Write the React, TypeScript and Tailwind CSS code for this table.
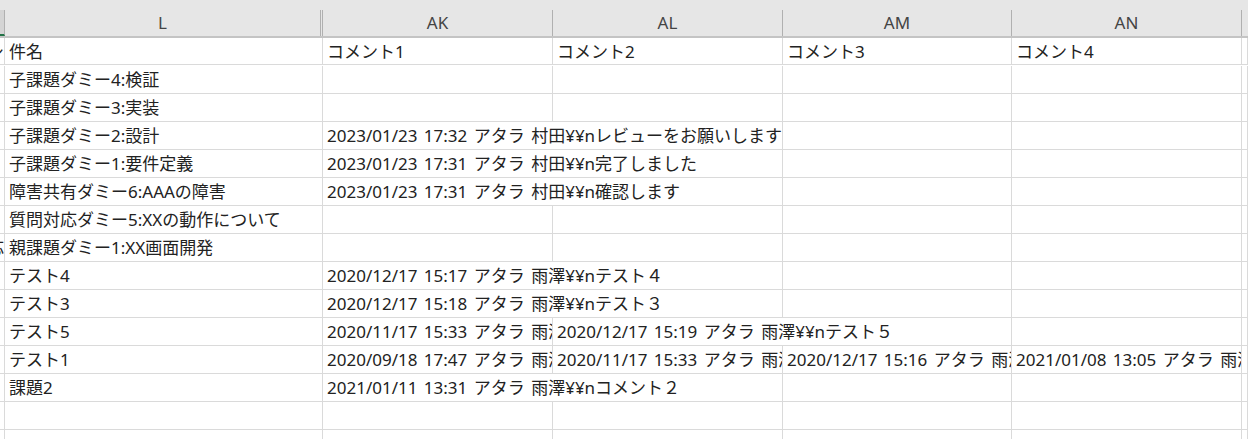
import React from "react";

type Seg = { span: number; text: string; frag?: boolean };

const SPAN: Record<number, string> = {
  1: "col-span-1",
  2: "col-span-2",
  3: "col-span-3",
  4: "col-span-4",
};

const FONT = {
  fontFamily: '"Noto Sans", "Noto Sans CJK JP", sans-serif',
};

function row(frag: string, l: string, rest: Array<[number, string]>): Seg[] {
  const segs: Seg[] = [{ span: 1, text: frag, frag: true }, { span: 1, text: l }];
  let used = 0;
  for (const [s, t] of rest) {
    segs.push({ span: s, text: t });
    used += s;
  }
  for (let i = used; i < 4; i++) segs.push({ span: 1, text: "" });
  segs.push({ span: 1, text: "" });
  return segs;
}

const ROWS: Seg[][] = [
  row("シ", "件名", [
    [1, "コメント1"],
    [1, "コメント2"],
    [1, "コメント3"],
    [1, "コメント4"],
  ]),
  row("", "子課題ダミー4:検証", []),
  row("", "子課題ダミー3:実装", []),
  row("", "子課題ダミー2:設計", [[2, "2023/01/23 17:32 アタラ 村田¥¥nレビューをお願いします"]]),
  row("", "子課題ダミー1:要件定義", [[2, "2023/01/23 17:31 アタラ 村田¥¥n完了しました"]]),
  row("", "障害共有ダミー6:AAAの障害", [[2, "2023/01/23 17:31 アタラ 村田¥¥n確認します"]]),
  row("", "質問対応ダミー5:XXの動作について", []),
  row("応", "親課題ダミー1:XX画面開発", []),
  row("", "テスト4", [[2, "2020/12/17 15:17 アタラ 雨澤¥¥nテスト４"]]),
  row("", "テスト3", [[2, "2020/12/17 15:18 アタラ 雨澤¥¥nテスト３"]]),
  row("", "テスト5", [
    [1, "2020/11/17 15:33 アタラ 雨澤¥¥nテスト５"],
    [2, "2020/12/17 15:19 アタラ 雨澤¥¥nテスト５"],
  ]),
  row("", "テスト1", [
    [1, "2020/09/18 17:47 アタラ 雨澤¥¥nテスト１"],
    [1, "2020/11/17 15:33 アタラ 雨澤¥¥nテスト１"],
    [1, "2020/12/17 15:16 アタラ 雨澤¥¥nテスト１"],
    [1, "2021/01/08 13:05 アタラ 雨澤¥¥nテスト１"],
  ]),
  row("", "課題2", [[2, "2021/01/11 13:31 アタラ 雨澤¥¥nコメント２"]]),
  row("", "", []),
  row("", "", []),
];

const HEADERS = ["", "L", "AK", "AL", "AM", "AN", ""];

export default function App() {
  return (
    <div className="w-[1248px] h-[439px] overflow-hidden bg-white text-[#222222]" style={FONT}>
      {/* column header */}
      <div className="grid grid-cols-[5px_318px_230px_230px_229px_230px_6px] h-[38px] bg-[#e6e6e6] border-b-2 border-[#c4c4c4]">
        {HEADERS.map((h, i) => (
          <div key={i} className="pt-[10px] h-full">
            {i === 0 ? (
              <div className="h-full bg-[#d4d4d4] border-r border-[#b0b0b0] border-b-2 border-b-[#217346]" />
            ) : i === 6 ? (
              <div className="h-full" />
            ) : i === 1 ? (
              <div className="h-full flex items-center justify-center border-r-[3px] border-double border-[#b0b0b0] text-[17px] text-[#444444]">
                {h}
              </div>
            ) : (
              <div className="h-full flex items-center justify-center border-r border-[#b0b0b0] text-[17px] text-[#444444]">
                {h}
              </div>
            )}
          </div>
        ))}
      </div>
      {/* body */}
      <div className="grid grid-cols-[5px_318px_230px_230px_229px_230px_6px] auto-rows-[28px]">
        {ROWS.map((r, ri) =>
          r.map((s, si) => (
            <div
              key={`${ri}-${si}`}
              className={`${SPAN[s.span]} ${ri === 0 ? "h-[27px]" : "h-[28px]"} border-r border-b border-[#dadada] overflow-hidden whitespace-nowrap flex items-center text-[17px] leading-none [word-spacing:2px] ${
                s.frag ? "justify-end" : "pl-[4px]"
              }`}
            >
              {s.text && <span className="shrink-0">{s.text}</span>}
            </div>
          ))
        )}
      </div>
    </div>
  );
}
